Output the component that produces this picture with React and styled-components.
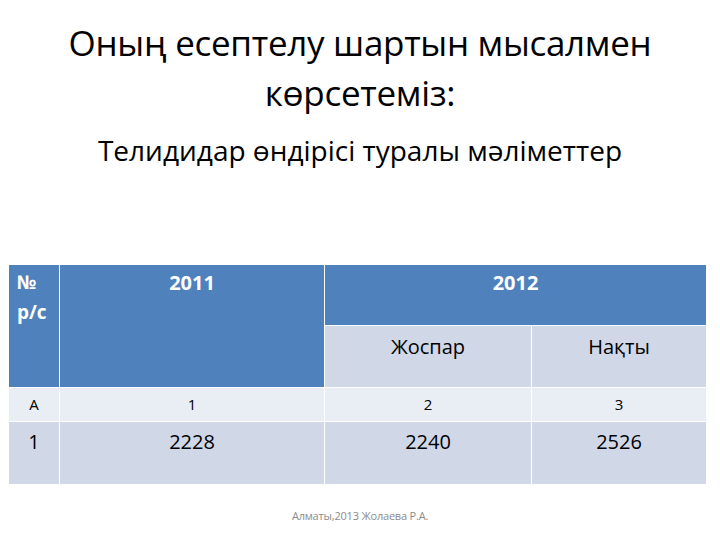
import React from 'react';
import styled, { createGlobalStyle } from 'styled-components';

const GlobalStyle = createGlobalStyle`
  html, body {
    margin: 0;
    padding: 0;
    background: #ffffff;
  }
  body {
    font-family: "Open Sans", "Noto Sans", "Liberation Sans", sans-serif;
  }
`;

const Slide = styled.div`
  width: 720px;
  height: 540px;
  display: flex;
  flex-direction: column;
  align-items: center;
  box-sizing: border-box;
  padding-top: 18px;
  overflow: hidden;
`;

const Title = styled.h1`
  margin: 0;
  font-weight: 400;
  font-size: 35px;
  line-height: 50px;
  letter-spacing: -0.3px;
  color: #000;
  text-align: center;
`;

const Subtitle = styled.h2`
  margin: 14px 0 0;
  font-weight: 400;
  font-size: 28px;
  line-height: 36px;
  color: #000;
  text-align: center;
`;

const Table = styled.div`
  margin-top: 97px;
  align-self: flex-start;
  margin-left: 9px;
  display: grid;
  grid-template-columns: 50px 264px 206px 174px;
  grid-template-rows: 60px 61px 33px 62px;
  gap: 1px;
  background: #ffffff;
`;

const Cell = styled.div`
  grid-column: ${p => p.col};
  grid-row: ${p => p.row};
  background: ${p => p.bg};
  color: ${p => p.color || '#000'};
  font-weight: ${p => (p.bold ? 700 : 400)};
  font-size: ${p => p.size}px;
  line-height: ${p => p.lh || p.size + 6}px;
  text-align: ${p => p.align || 'center'};
  padding: ${p => p.pad || '5px 0 0'};
  box-sizing: border-box;
  overflow: hidden;
  white-space: pre;
`;

const Footer = styled.div`
  margin-top: 24px;
  font-size: 11px;
  color: #8c8c8c;
  letter-spacing: -0.2px;
`;

const BLUE = '#4f81bd';
const LIGHT = '#d0d8e8';
const PALE = '#e9edf4';

export default function App() {
  return (
    <>
      <GlobalStyle />
      <Slide>
        <Title>
          Оның есептелу шартын мысалмен
          <br />
          көрсетеміз:
        </Title>
        <Subtitle>Телидидар өндірісі туралы мәліметтер</Subtitle>
        <Table>
          <Cell col="1" row="1 / 3" bg={BLUE} color="#fff" bold size={19} lh={30} align="left" pad="2px 0 0 8px">
            {'№\nр/с'}
          </Cell>
          <Cell col="2" row="1 / 3" bg={BLUE} color="#fff" bold size={20}>2011</Cell>
          <Cell col="3 / 5" row="1" bg={BLUE} color="#fff" bold size={20}>2012</Cell>
          <Cell col="3" row="2" bg={LIGHT} size={20} pad="8px 0 0">Жоспар</Cell>
          <Cell col="4" row="2" bg={LIGHT} size={20} pad="8px 0 0">Нақты</Cell>

          <Cell col="1" row="3" bg={PALE} size={15} pad="6px 0 0">А</Cell>
          <Cell col="2" row="3" bg={PALE} size={15} pad="6px 0 0">1</Cell>
          <Cell col="3" row="3" bg={PALE} size={15} pad="6px 0 0">2</Cell>
          <Cell col="4" row="3" bg={PALE} size={15} pad="6px 0 0">3</Cell>

          <Cell col="1" row="4" bg={LIGHT} size={20} pad="7px 0 0">1</Cell>
          <Cell col="2" row="4" bg={LIGHT} size={20} pad="7px 0 0">2228</Cell>
          <Cell col="3" row="4" bg={LIGHT} size={20} pad="7px 0 0">2240</Cell>
          <Cell col="4" row="4" bg={LIGHT} size={20} pad="7px 0 0">2526</Cell>
        </Table>
        <Footer>Алматы,2013 Жолаева Р.А.</Footer>
      </Slide>
    </>
  );
}
